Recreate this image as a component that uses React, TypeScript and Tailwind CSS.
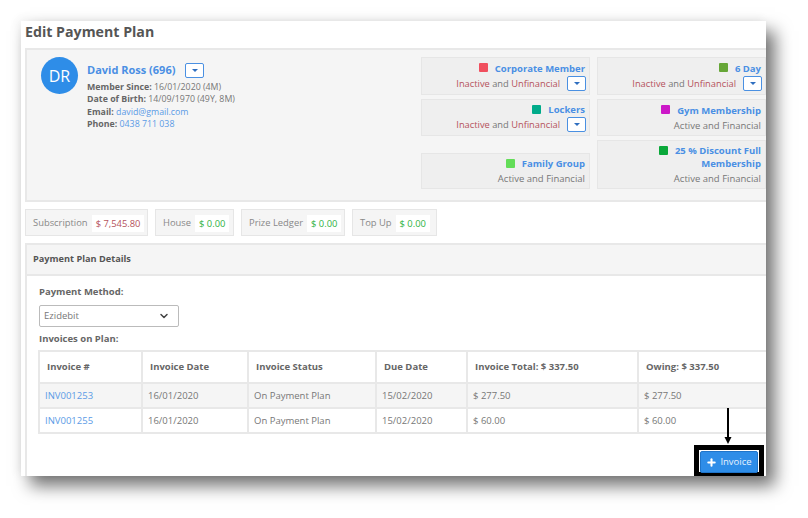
import { ChevronDown, Plus } from "lucide-react";

const memberships = [
  [
    { name: "Corporate Member", color: "bg-[#f04f5e]", inactive: true },
    { name: "6 Day", color: "bg-[#66a637]", inactive: true },
  ],
  [
    { name: "Lockers", color: "bg-[#00ab8a]", inactive: true },
    { name: "Gym Membership", color: "bg-[#cc18c8]", inactive: false },
  ],
  [
    { name: "Family Group", color: "bg-[#63dd58]", inactive: false },
    { name: "25 % Discount Full Membership", color: "bg-[#0aa83a]", inactive: false },
  ],
];

const balances = [
  { label: "Subscription", value: "$ 7,545.80", color: "text-[#b5525c]", w: "w-[123px]" },
  { label: "House", value: "$ 0.00", color: "text-[#2fb344]", w: "w-[79px]" },
  { label: "Prize Ledger", value: "$ 0.00", color: "text-[#2fb344]", w: "w-[104px]" },
  { label: "Top Up", value: "$ 0.00", color: "text-[#2fb344]", w: "w-[85px]" },
];

const invoices = [
  { id: "INV001253", total: "$ 277.50", bg: "bg-[#f5f5f5]" },
  { id: "INV001255", total: "$ 60.00", bg: "bg-white" },
];

const Caret = ({ className }: { className: string }) => (
  <button className={`flex shrink-0 items-center justify-center rounded-[2px] border border-[#4a90e2] bg-white ${className}`}>
    <span className="h-0 w-0 border-x-[3.5px] border-t-[3.5px] border-x-transparent border-t-[#2f6fc0]" />
  </button>
);

const MembershipCard = ({ name, color, inactive, className }: { name: string; color: string; inactive: boolean; className: string }) => (
  <div className={`flex w-[169px] flex-col justify-center border border-[#e6e6e6] bg-[#efefef] pl-1 pr-1 text-right text-[9.5px] leading-[13px] ${className}`}>
    <div className="font-bold leading-[13px] text-[#4a8fe4]">
      <span className={`mr-[7px] inline-block h-[9px] w-[9px] rounded-[1px] align-[-0.5px] ${color}`} />
      {name}
    </div>
    {inactive ? (
      <div className="-mr-px mt-[1px] flex items-center justify-end text-[9.3px] text-[#777]">
        <span className="mr-[7px] whitespace-nowrap">
          <span className="text-[#b5525c]">Inactive</span> and <span className="text-[#b5525c]">Unfinancial</span>
        </span>
        <Caret className="h-[15px] w-[19px]" />
      </div>
    ) : (
      <div className="mt-[2px] text-[#777]">Active and Financial</div>
    )}
  </div>
);

const App = () => {
  return (
    <div className="h-[518px] w-[808px] overflow-hidden bg-white pl-[21px] pt-[21px] font-['Open_Sans',sans-serif]">
      <div className="relative h-[455px] w-[745px] overflow-hidden bg-white pl-1 shadow-[9px_10px_16px_rgba(0,0,0,0.55),-3px_-2px_10px_rgba(0,0,0,0.06)]">
        <h1 className="h-[27px] text-[14.2px] font-bold leading-[22px] text-[#555]">Edit Payment Plan</h1>

        <div className="flex h-[154px] w-[760px] border-2 border-[#e8e8e8] bg-[#f5f5f5] pl-[14px] pt-[7px]">
          <div className="flex h-[37px] w-[37px] shrink-0 items-center justify-center rounded-full bg-[#2e8de8] text-[16px] text-white">
            DR
          </div>
          <div className="ml-[9px] w-[334px] pt-[5px] text-[8.8px] leading-[12.3px] text-[#777]">
            <div className="flex h-[17px] items-center">
              <span className="text-[11px] font-bold text-[#4a8fe4]">David Ross (696)</span>
              <Caret className="ml-[10px] h-[15px] w-[19px]" />
            </div>
            <div className="mt-[2px]"><b className="text-[#666]">Member Since:</b> 16/01/2020 (4M)</div>
            <div><b className="text-[#666]">Date of Birth:</b> 14/09/1970 (49Y, 8M)</div>
            <div><b className="text-[#666]">Email:</b> <span className="text-[#5b9be6]">david@gmail.com</span></div>
            <div><b className="text-[#666]">Phone:</b> <span className="text-[#5b9be6]">0438 711 038</span></div>
          </div>
          <div className="flex flex-col gap-1">
            <div className="flex gap-[7px]">
              <MembershipCard {...memberships[0][0]} className="h-[38px]" />
              <MembershipCard {...memberships[0][1]} className="h-[38px]" />
            </div>
            <div className="flex gap-[7px]">
              <MembershipCard {...memberships[1][0]} className="h-[37px]" />
              <MembershipCard {...memberships[1][1]} className="h-[37px]" />
            </div>
            <div className="flex items-end gap-[7px]">
              <MembershipCard {...memberships[2][0]} className="h-[36px]" />
              <MembershipCard {...memberships[2][1]} className="h-[49px]" />
            </div>
          </div>
        </div>

        <div className="mt-[7px] flex h-[27px] gap-[7px]">
          {balances.map((b) => (
            <div key={b.label} className={`flex items-center whitespace-nowrap border border-[#e6e6e6] bg-[#f5f5f5] pl-[7px] pt-px text-[9.4px] text-[#888] ${b.w}`}>
              <span>{b.label}</span>
              <span className={`ml-[4px] bg-white px-1 py-[2px] leading-[13px] ${b.color}`}>{b.value}</span>
            </div>
          ))}
        </div>

        <div className="mt-[7px] h-[240px] w-[760px] border-x-2 border-t-2 border-[#e8e8e8]">
          <div className="flex h-[31px] items-center border-b-2 border-[#e8e8e8] bg-[#f5f5f5] pb-px pl-[6px] text-[9.2px] font-bold text-[#555]">
            Payment Plan Details
          </div>
          <div className="pl-3 pt-[9px]">
            <div className="text-[9.5px] font-bold leading-[14px] text-[#666]">Payment Method:</div>
            <div className="mt-[6px] flex h-[22px] w-[140px] items-center justify-between rounded-[2px] border border-[#bbb] bg-white pl-1 pr-2 text-[9.5px] text-[#777]">
              Ezidebit
              <ChevronDown size={12} strokeWidth={3} className="text-[#444]" />
            </div>
            <div className="mt-[5px] text-[9.5px] font-bold leading-[14px] text-[#666]">Invoices on Plan:</div>
            <table className="-ml-px mt-[4px] w-[760px] table-fixed border-collapse text-left text-[9.5px] text-[#777]">
              <colgroup>
                <col className="w-[103px]" />
                <col className="w-[106px]" />
                <col className="w-[128px]" />
                <col className="w-[91px]" />
                <col className="w-[171px]" />
                <col />
              </colgroup>
              <thead>
                <tr className="h-[32px] font-bold text-[#666]">
                  {["Invoice #", "Invoice Date", "Invoice Status", "Due Date", "Invoice Total: $ 337.50", "Owing: $ 337.50"].map((h) => (
                    <th key={h} className="border-2 border-[#e8e8e8] pl-[7px] font-bold">{h}</th>
                  ))}
                </tr>
              </thead>
              <tbody>
                {invoices.map((inv) => (
                  <tr key={inv.id} className={`h-[25px] ${inv.bg}`}>
                    <td className="border-2 border-[#e8e8e8] pl-[5px] pt-px text-[#5b9be6]">{inv.id}</td>
                    <td className="border-2 border-[#e8e8e8] pl-[5px] pt-px">16/01/2020</td>
                    <td className="border-2 border-[#e8e8e8] pl-[5px] pt-px">On Payment Plan</td>
                    <td className="border-2 border-[#e8e8e8] pl-[5px] pt-px">15/02/2020</td>
                    <td className="border-2 border-[#e8e8e8] pl-[5px] pt-px">{inv.total}</td>
                    <td className="border-2 border-[#e8e8e8] pl-[5px] pt-px">{inv.total}</td>
                  </tr>
                ))}
              </tbody>
            </table>
          </div>
        </div>

        {/* annotation over the page: arrow and highlight box */}
        <div className="absolute left-[673px] top-[424px] h-[31px] w-[70px] border-[5px] border-b-[4px] border-black bg-white p-px">
          <button className="flex h-[22px] w-[58px] items-center justify-center gap-[3px] rounded-[2px] border border-[#1f74c9] bg-[#2e8de8] text-[9.5px] text-[#e6f2ff]">
            <Plus size={11} strokeWidth={4.5} className="text-white" />
            Invoice
          </button>
        </div>
        <svg className="absolute left-[702px] top-[387px]" width="10" height="37" viewBox="0 0 10 37">
          <path d="M5 0V30" stroke="#000" strokeWidth="2" fill="none" />
          <path d="M1.5 29H8.5L5 36Z" fill="#000" />
        </svg>
      </div>
    </div>
  );
};

export default App;
